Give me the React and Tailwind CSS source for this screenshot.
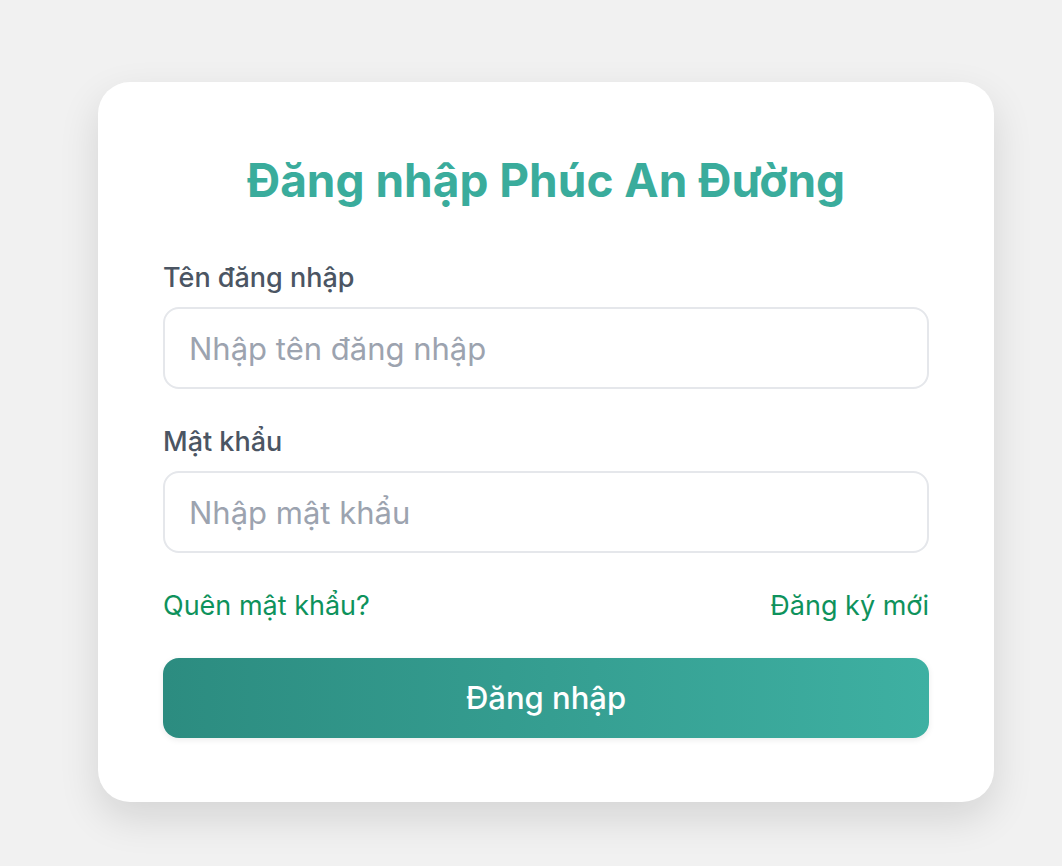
export default function App() {
  return (
    <div className="min-h-screen bg-[#f1f1f1] pt-[82px] pl-[98px]" style={{ fontFamily: 'Inter, "Noto Sans", sans-serif' }}>
      <div className="w-[896px] h-[720px] rounded-[32px] bg-white px-[65px] pt-[68px] shadow-[0_16px_40px_rgba(0,0,0,0.12)]">
        <h1 className="mb-[50px] text-center text-[46px] font-bold leading-[60px] text-[#3aac9c]">
          Đăng nhập Phúc An Đường
        </h1>

        <label className="block text-[27px] font-medium leading-[36px] text-[#4b5563] mb-[11px]">Tên đăng nhập</label>
        <input
          className="block w-full h-[82px] rounded-[16px] border-2 border-[#e5e7eb] px-[24px] text-[31px] outline-none placeholder:text-[#9ca3af]"
          placeholder="Nhập tên đăng nhập"
        />

        <label className="block mt-[35px] text-[27px] font-medium leading-[36px] text-[#4b5563] mb-[11px]">Mật khẩu</label>
        <input
          type="password"
          className="block w-full h-[82px] rounded-[16px] border-2 border-[#e5e7eb] px-[24px] text-[31px] outline-none placeholder:text-[#9ca3af]"
          placeholder="Nhập mật khẩu"
        />

        <div className="mt-[35px] flex items-center justify-between text-[27px] leading-[36px] text-[#0e925c]">
          <a href="#">Quên mật khẩu?</a>
          <a href="#">Đăng ký mới</a>
        </div>

        <button className="mt-[34px] w-full h-[80px] rounded-[16px] bg-gradient-to-r from-[#2c8c80] to-[#3eb0a2] text-[31px] font-medium text-white shadow-[0_2px_6px_rgba(0,0,0,0.08)]">
          Đăng nhập
        </button>
      </div>
    </div>
  );
}
